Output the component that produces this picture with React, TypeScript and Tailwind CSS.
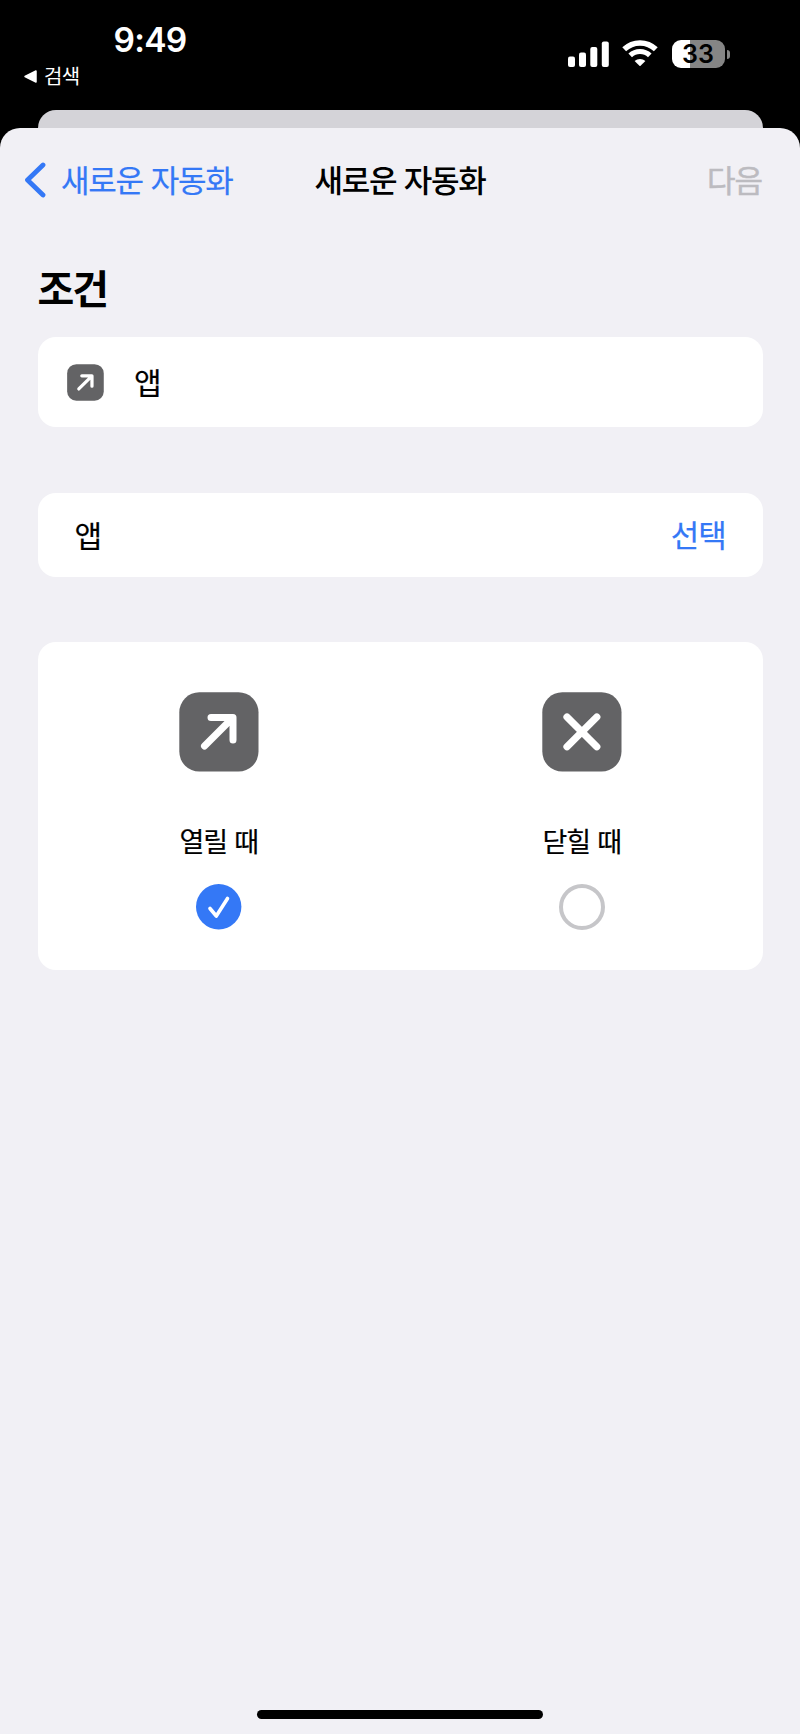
import React from "react";

const ArrowIcon: React.FC<{ className: string }> = ({ className }) => (
    <svg viewBox="0 0 80 80" className={className} fill="none">
        <rect x="0.300" y="0.300" width="79.200" height="79.200" rx="20" fill="#636365" />
        <path
            d="M25.500 54 53.500 26M32 25.500H54V48"
            stroke="white"
            strokeWidth="7"
            strokeLinecap="round"
            strokeLinejoin="round"
        />
    </svg>
);

const CloseIcon: React.FC<{ className: string }> = ({ className }) => (
    <svg viewBox="0 0 80 80" className={className} fill="none">
        <rect x="0.300" y="0.300" width="79.200" height="79.200" rx="20" fill="#636365" />
        <path
            d="M25 25 54.800 54.800M54.800 25 25 54.800"
            stroke="white"
            strokeWidth="7.200"
            strokeLinecap="round"
        />
    </svg>
);

const StatusBar: React.FC = () => (
    <header className="flex h-[110px] justify-between pl-6 pr-[70px] text-white">
        <div className="pt-5">
            <p className="pl-[89.5px] font-[Inter,sans-serif] text-[33.5px] font-semibold leading-[41px] tracking-[-0.7px]">
                9:49
            </p>
            <div className="mt-[3px] flex items-center">
                <svg viewBox="0 0 13 13" className="h-[13px] w-[13px]">
                    <path
                        d="M1 6.500 12 1v11Z"
                        fill="white"
                        stroke="white"
                        strokeWidth="1.500"
                        strokeLinejoin="round"
                    />
                </svg>
                <span className="ml-[7px] text-[20px] leading-6 tracking-[-0.6px]">
                    검색
                </span>
            </div>
        </div>
        <div className="mt-10 flex h-7">
            <svg viewBox="0 0 41 26" className="mt-[0.5px] h-[26px] w-[41px]" fill="white">
                <rect x="0" y="15.500" width="7" height="10.500" rx="2" />
                <rect x="11" y="11.500" width="7" height="14.500" rx="2" />
                <rect x="22.300" y="6" width="7" height="20" rx="2" />
                <rect x="33.800" y="0.500" width="7" height="25.500" rx="2" />
            </svg>
            <svg
                viewBox="0 0 36 26"
                className="ml-[13.5px] h-[26px] w-9"
                fill="none"
                stroke="white"
            >
                <path d="M2.200 9.300a22.700 22.700 0 0 1 31.600 0" strokeWidth="5.500" />
                <path d="M8.200 15.400a14.200 14.200 0 0 1 19.600 0" strokeWidth="5.200" />
                <path d="M12.600 21a8.300 8.300 0 0 1 10.800 0L18 26.300Z" fill="white" stroke="none" />
            </svg>
            <div className="ml-[13.5px] flex h-7 w-[53px] items-center justify-center rounded-[9px] bg-[linear-gradient(to_right,white_34%,#858585_34%)] font-[Inter,sans-serif] text-[25px] font-semibold leading-7 text-black">
                33
            </div>
            <div className="ml-0.5 mt-[9.5px] h-[9px] w-[3.5px] rounded-r-full bg-[#858585]" />
        </div>
    </header>
);

const NewAutomation: React.FC = () => (
    <div className="flex h-[1734px] w-[800px] flex-col overflow-hidden bg-black font-['Noto_Sans_CJK_KR',sans-serif] text-black">
        <StatusBar />
        {/* edge of the sheet underneath */}
        <div className="mx-[37.5px] h-[18px] shrink-0 rounded-t-[18px] bg-[#d4d3d8]" />
        <div className="flex flex-1 flex-col rounded-t-[20px] bg-[#f1f0f5]">
            <nav className="grid h-[101px] grid-cols-3 items-center px-6 text-[31px] leading-[44px] tracking-[-1.3px]">
                <button className="flex items-center whitespace-nowrap text-[#3478f6]">
                    <svg
                        viewBox="0 0 22 36"
                        className="mt-[3px] h-9 w-[22px]"
                        fill="none"
                        stroke="currentColor"
                        strokeWidth="4.800"
                        strokeLinecap="round"
                        strokeLinejoin="round"
                    >
                        <path d="M19 3 3.500 18 19 33" />
                    </svg>
                    <span className="ml-[15px] [-webkit-text-stroke:0.2px] [word-spacing:2.500px]">
                        새로운 자동화
                    </span>
                </button>
                <h1 className="text-center font-medium [word-spacing:2px]">새로운 자동화</h1>
                <button className="pr-[14px] text-right tracking-[-1px] text-[#bcbbc0] [-webkit-text-stroke:0.5px]">
                    다음
                </button>
            </nav>

            <main className="px-[37.5px]">
                <h2 className="mt-[28px] text-[40px] font-bold leading-[60px] tracking-[-2px]">
                    조건
                </h2>
                <section className="mt-5 flex h-[90px] items-center rounded-[18px] bg-white pl-[29.5px]">
                    <ArrowIcon className="mt-px h-[37px] w-[37px]" />
                    <span className="-mt-[3px] ml-[30px] text-[30px] leading-[44px] [-webkit-text-stroke:0.2px]">
                        앱
                    </span>
                </section>
                <section className="mt-[66px] flex h-[83.5px] items-center justify-between rounded-[18px] bg-white pb-[2px] pl-[37px] pr-[37px] text-[30px] leading-[44px] [-webkit-text-stroke:0.2px]">
                    <span>앱</span>
                    <button className="text-[31px] tracking-[-1.2px] text-[#3478f6]">선택</button>
                </section>
                <section className="mt-[65.5px] grid h-[328px] grid-cols-2 rounded-[18px] bg-white pt-[50px] text-[27px] leading-10 tracking-[-1.1px] [word-spacing:2.5px]">
                    <div className="flex flex-col items-center">
                        <ArrowIcon className="h-20 w-20" />
                        <p className="mt-[49px] [-webkit-text-stroke:0.2px]">열릴 때</p>
                        <svg viewBox="0 0 46 46" className="mt-[23px] h-[46px] w-[46px]" fill="none">
                            <circle cx="22.700" cy="22.700" r="22.700" fill="#3478f6" />
                            <path
                                d="M14 24.500 20.300 32 31.500 14.500"
                                stroke="white"
                                strokeWidth="3.600"
                                strokeLinecap="round"
                                strokeLinejoin="round"
                            />
                        </svg>
                    </div>
                    <div className="flex flex-col items-center pl-px">
                        <CloseIcon className="h-20 w-20" />
                        <p className="mt-[49px] [-webkit-text-stroke:0.2px]">닫힐 때</p>
                        <div className="mt-[23px] h-[45.5px] w-[45.5px] rounded-full border-4 border-[#c6c6c9]" />
                    </div>
                </section>
            </main>

            <div className="mx-auto mt-auto mb-[15px] h-[9px] w-[286px] rounded-full bg-black" />
        </div>
    </div>
);

export default NewAutomation;
